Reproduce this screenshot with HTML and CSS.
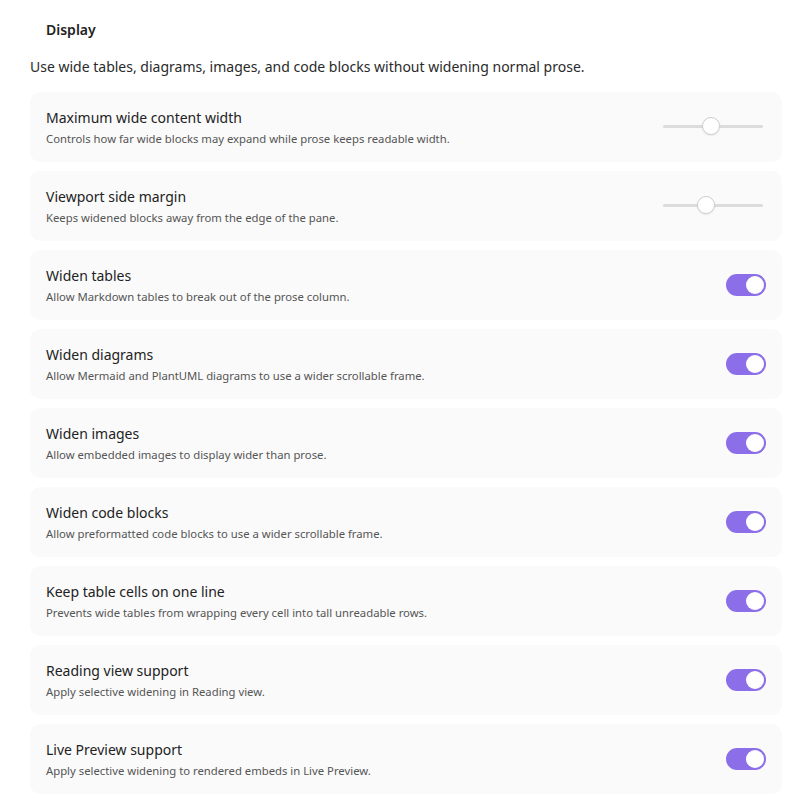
FILE: index.html
```html
<!DOCTYPE html>
<html>
<head>
  <title>Display settings</title>
  <link rel="stylesheet" href="styles.css">
</head>
<body>
  <div class="settings">
    <h2 class="section-heading">Display</h2>
    <p class="section-intro">Use wide tables, diagrams, images, and code blocks without widening normal prose.</p>

    <div class="setting-list">
      <div class="setting-item">
        <div class="setting-info">
          <div class="setting-name">Maximum wide content width</div>
          <div class="setting-desc">Controls how far wide blocks may expand while prose keeps readable width.</div>
        </div>
        <div class="slider"><div class="slider-thumb" style="left: 39px"></div></div>
      </div>

      <div class="setting-item">
        <div class="setting-info">
          <div class="setting-name">Viewport side margin</div>
          <div class="setting-desc">Keeps widened blocks away from the edge of the pane.</div>
        </div>
        <div class="slider"><div class="slider-thumb" style="left: 34px"></div></div>
      </div>

      <div class="setting-item">
        <div class="setting-info">
          <div class="setting-name">Widen tables</div>
          <div class="setting-desc">Allow Markdown tables to break out of the prose column.</div>
        </div>
        <div class="toggle is-on"></div>
      </div>

      <div class="setting-item">
        <div class="setting-info">
          <div class="setting-name">Widen diagrams</div>
          <div class="setting-desc">Allow Mermaid and PlantUML diagrams to use a wider scrollable frame.</div>
        </div>
        <div class="toggle is-on"></div>
      </div>

      <div class="setting-item">
        <div class="setting-info">
          <div class="setting-name">Widen images</div>
          <div class="setting-desc">Allow embedded images to display wider than prose.</div>
        </div>
        <div class="toggle is-on"></div>
      </div>

      <div class="setting-item">
        <div class="setting-info">
          <div class="setting-name">Widen code blocks</div>
          <div class="setting-desc">Allow preformatted code blocks to use a wider scrollable frame.</div>
        </div>
        <div class="toggle is-on"></div>
      </div>

      <div class="setting-item">
        <div class="setting-info">
          <div class="setting-name">Keep table cells on one line</div>
          <div class="setting-desc">Prevents wide tables from wrapping every cell into tall unreadable rows.</div>
        </div>
        <div class="toggle is-on"></div>
      </div>

      <div class="setting-item">
        <div class="setting-info">
          <div class="setting-name">Reading view support</div>
          <div class="setting-desc">Apply selective widening in Reading view.</div>
        </div>
        <div class="toggle is-on"></div>
      </div>

      <div class="setting-item">
        <div class="setting-info">
          <div class="setting-name">Live Preview support</div>
          <div class="setting-desc">Apply selective widening to rendered embeds in Live Preview.</div>
        </div>
        <div class="toggle is-on"></div>
      </div>
    </div>
  </div>
</body>
</html>
```

FILE: styles.css
```css
body {
  font-family: 'Noto Sans', 'Open Sans', sans-serif;
  background: #fff;
  margin: 0;
  color: #222;
}
.settings {
  padding: 0 14px 0 30px;
}
.section-heading {
  font-size: 14px;
  font-weight: 600;
  margin: 0;
  padding: 19px 0 0 16px;
  line-height: 22px;
}
.section-intro {
  font-size: 14px;
  margin: 15px 0 14px;
  line-height: 22px;
  color: #2a2a2a;
}
.setting-list {
  display: flex;
  flex-direction: column;
  gap: 9px;
}
.setting-item {
  display: flex;
  align-items: center;
  justify-content: space-between;
  height: 70px;
  box-sizing: border-box;
  padding: 0 16px;
  background: #fafafa;
  border-radius: 10px;
}
.setting-name {
  font-size: 14px;
  line-height: 20px;
  color: #222;
}
.setting-desc {
  font-size: 11.3px;
  line-height: 16px;
  margin-top: 3px;
  color: #555;
}
.slider {
  position: relative;
  width: 100px;
  height: 3px;
  margin-right: 3px;
  margin-top: -2px;
  background: #dcdcdc;
  border-radius: 2px;
}
.slider-thumb {
  position: absolute;
  top: -8px;
  width: 18px;
  height: 18px;
  box-sizing: border-box;
  border-radius: 50%;
  background: #fff;
  border: 1px solid #cfcfcf;
  box-shadow: 0 1px 2px rgba(0,0,0,0.08);
}
.toggle {
  position: relative;
  width: 40px;
  height: 22px;
  border-radius: 11px;
  background: #8b6ee8;
}
.toggle::after {
  content: '';
  position: absolute;
  top: 2px;
  right: 2px;
  width: 18px;
  height: 18px;
  border-radius: 50%;
  background: #fff;
}
```
